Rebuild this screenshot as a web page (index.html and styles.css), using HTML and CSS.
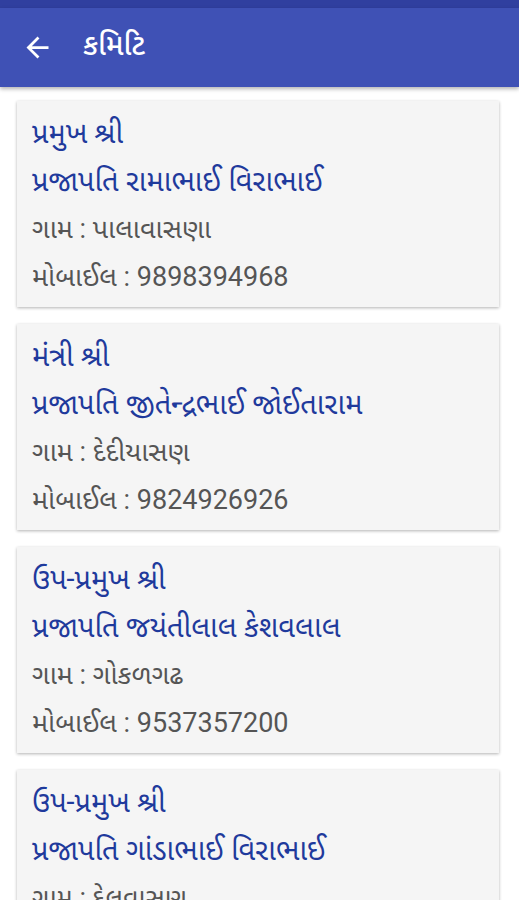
FILE: index.html
```html
<!DOCTYPE html>
<html lang="gu">
  <head>
    <meta charset="UTF-8" />
    <meta name="viewport" content="width=device-width, initial-scale=1.0" />
    <title>કમિટિ</title>
    <link rel="stylesheet" href="styles.css">
  </head>
  <body>
    <div class="statusbar"></div>
    <header class="toolbar">
      <svg class="back" width="33" height="33" viewBox="0 0 24 24">
        <path d="M20 11H7.83l5.59-5.59L12 4l-8 8 8 8 1.41-1.41L7.83 13H20v-2z" fill="#fff" />
      </svg>
      <h1>કમિટિ</h1>
    </header>

    <main class="list">
      <div class="card">
        <div class="role">પ્રમુખ શ્રી</div>
        <div class="name">પ્રજાપતિ રામાભાઈ વિરાભાઈ</div>
        <div class="info">ગામ : પાલાવાસણા</div>
        <div class="info">મોબાઈલ : 9898394968</div>
      </div>
      <div class="card">
        <div class="role">મંત્રી શ્રી</div>
        <div class="name">પ્રજાપતિ જીતેન્દ્રભાઈ જોઈતારામ</div>
        <div class="info">ગામ : દેદીયાસણ</div>
        <div class="info">મોબાઈલ : 9824926926</div>
      </div>
      <div class="card">
        <div class="role">ઉપ-પ્રમુખ શ્રી</div>
        <div class="name">પ્રજાપતિ જયંતીલાલ કેશવલાલ</div>
        <div class="info">ગામ : ગોકળગઢ</div>
        <div class="info">મોબાઈલ : 9537357200</div>
      </div>
      <div class="card">
        <div class="role">ઉપ-પ્રમુખ શ્રી</div>
        <div class="name">પ્રજાપતિ ગાંડાભાઈ વિરાભાઈ</div>
        <div class="info">ગામ : દેલવાસણ</div>
        <div class="info">મોબાઈલ : 9825000000</div>
      </div>
    </main>
  </body>
</html>
```

FILE: styles.css
```css
body {
  margin: 0;
  background-color: #fff;
  font-family: Roboto, "Noto Sans Gujarati", "Noto Sans", sans-serif;
  overflow: hidden;
}
.statusbar {
  height: 8px;
  background-color: #303f9f;
}
.toolbar {
  height: 79px;
  background-color: #3f51b5;
  display: flex;
  align-items: center;
  padding-left: 21px;
  gap: 29px;
  box-shadow: 0 2px 4px rgba(0, 0, 0, 0.3);
  position: relative;
}
.toolbar h1 {
  margin: 0;
  color: #fff;
  font-size: 29px;
  font-weight: 500;
}
.list {
  padding: 14px 20px 0 17px;
  display: flex;
  flex-direction: column;
  gap: 17px;
}
.card {
  background-color: #f5f5f5;
  box-shadow: 0 1px 3px rgba(0, 0, 0, 0.3);
  padding: 8px 15px 6px;
}
.role,
.name {
  color: #1f3a9c;
  font-size: 29px;
  line-height: 48px;
  white-space: nowrap;
}
.info {
  color: #555;
  font-size: 27px;
  line-height: 48px;
  white-space: nowrap;
}
```
